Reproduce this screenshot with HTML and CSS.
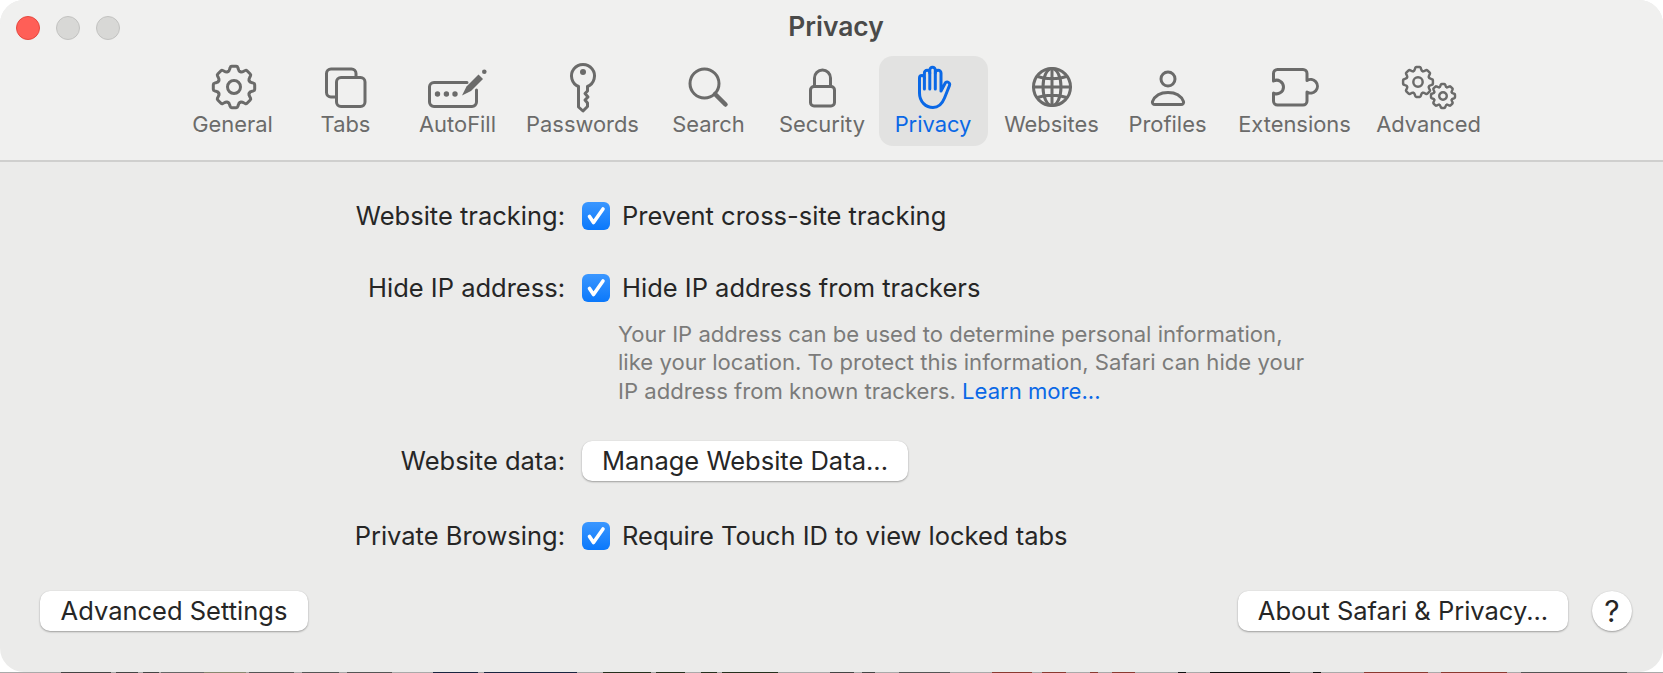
FILE: index.html
```html
<!DOCTYPE html>
<html lang="en">
<head>
<meta charset="utf-8">
<title>Privacy</title>
<link rel="stylesheet" href="styles.css">
</head>
<body>
<svg class="defs" width="0" height="0" aria-hidden="true">
  <defs>
    <linearGradient id="blue" x1="0" y1="0" x2="0" y2="1"><stop offset="0" stop-color="#3b97ff"/><stop offset="1" stop-color="#0a78fb"/></linearGradient>
    <path id="tooth" d="M-6.3-15.2C-5-15.6-4.6-16.5-4.3-18L-3.8-19.5Q-3.5-20.7-2.3-20.7H2.3Q3.5-20.7 3.8-19.5L4.3-18C4.6-16.5 5-15.6 6.3-15.2"/>
    <g id="gear">
      <use href="#tooth"/>
      <use href="#tooth" transform="rotate(45)"/>
      <use href="#tooth" transform="rotate(90)"/>
      <use href="#tooth" transform="rotate(135)"/>
      <use href="#tooth" transform="rotate(180)"/>
      <use href="#tooth" transform="rotate(225)"/>
      <use href="#tooth" transform="rotate(270)"/>
      <use href="#tooth" transform="rotate(315)"/>
      <circle r="6.5"/>
    </g>
    <path id="check" d="M7.5 14.5L11.5 20.5L21 7"/>
  </defs>
</svg>
<main class="window">
  <header class="head">
    <div class="titlebar">
      <div class="lights">
        <span class="light red"></span>
        <span class="light"></span>
        <span class="light"></span>
      </div>
      <h1 class="title">Privacy</h1>
    </div>
    <nav class="toolbar">
      <a class="tab">
        <svg class="ico" viewBox="0 0 64 52"><use href="#gear" transform="translate(33 26)"/></svg>
        <span>General</span>
      </a>
      <a class="tab">
        <svg class="ico" viewBox="0 0 64 52"><path d="M42 15V12.500A4.500 4.500 0 0 0 37.500 8H17A4.500 4.500 0 0 0 12.500 12.500V31.500A4.500 4.500 0 0 0 17 36H21"/><rect x="22.500" y="16.500" width="28.500" height="29" rx="4.500"/></svg>
        <span>Tabs</span>
      </a>
      <a class="tab">
        <svg class="ico" viewBox="0 0 64 52"><path d="M41 21.500H8A4.500 4.500 0 0 0 3.500 26V41A4.500 4.500 0 0 0 8 45.500H46A4.500 4.500 0 0 0 50.500 41V29"/><g class="solid"><circle cx="11.500" cy="33" r="2.700"/><circle cx="20.400" cy="33" r="2.700"/><circle cx="29" cy="33" r="2.700"/><path d="M36 34.500L40.500 25.500L52.500 13.500L57 18L45 30Z"/><circle cx="58.300" cy="10.800" r="2.300"/></g></svg>
        <span>AutoFill</span>
      </a>
      <a class="tab">
        <svg class="ico" viewBox="0 0 64 52"><path d="M27.500 25.500A11.500 11.500 0 1 1 36.500 25.500V30L34 32.500L37 36L34 39L36.500 42V45.500L32 50L27.500 46Z"/><circle class="solid" cx="32" cy="11" r="3"/></svg>
        <span>Passwords</span>
      </a>
      <a class="tab">
        <svg class="ico" viewBox="0 0 64 52"><circle cx="27.500" cy="22.500" r="14.500"/><path class="thick" d="M38 33L48.500 43.500"/></svg>
        <span>Search</span>
      </a>
      <a class="tab">
        <svg class="ico" viewBox="0 0 64 52"><rect x="20.500" y="25.500" width="24" height="19.500" rx="3.500"/><path d="M24.500 25V17A8 8 0 0 1 40.500 17V25"/></svg>
        <span>Security</span>
      </a>
      <a class="tab active">
        <svg class="ico" viewBox="0 0 64 52"><path d="M40 30V12A2.850 2.850 0 0 0 34.300 12V9A2.750 2.750 0 0 0 28.800 9V12A2.700 2.700 0 0 0 23.400 12V17A2.450 2.450 0 0 0 18.500 17V32C18.500 41 25 46.500 32 46.500C38 46.500 41.500 42 43.500 37L48.500 24.500A2.400 2.400 0 0 0 44 22.500L40 30"/><path d="M23.400 17V28M28.800 12V28M34.300 12V28"/></svg>
        <span>Privacy</span>
      </a>
      <a class="tab">
        <svg class="ico" viewBox="0 0 64 52"><circle cx="32" cy="26" r="18.500"/><ellipse cx="32" cy="26" rx="9" ry="18.500"/><path d="M32 7.500V44.500M13.500 26H50.500M17.500 15.500C26 18.500 38 18.500 46.500 15.500M17.500 36.500C26 33.500 38 33.500 46.500 36.500"/></svg>
        <span>Websites</span>
      </a>
      <a class="tab">
        <svg class="ico" viewBox="0 0 64 52"><circle cx="32" cy="18" r="7"/><path d="M19 43.500H45C47 43.500 48 42 47.500 40.500C45 34.500 39 31.500 32 31.500C25 31.500 19 34.500 16.500 40.500C16 42 17 43.500 19 43.500Z"/></svg>
        <span>Profiles</span>
      </a>
      <a class="tab">
        <svg class="ico" viewBox="0 0 64 52"><path d="M14.500 8.500H40A4 4 0 0 1 44 12.500V19.500A6.800 6.800 0 1 1 44 31V40A4 4 0 0 1 40 44H14.500A4 4 0 0 1 10.500 40V32A6.800 6.800 0 1 0 10.500 20V12.500A4 4 0 0 1 14.500 8.500Z"/></svg>
        <span>Extensions</span>
      </a>
      <a class="tab">
        <svg class="ico" viewBox="0 0 64 52"><use class="big" href="#gear" transform="translate(21 21) scale(.72)"/><use class="small" href="#gear" transform="translate(46 35) scale(.58)"/></svg>
        <span>Advanced</span>
      </a>
    </nav>
  </header>
  <section class="pane">
    <div class="row first">
      <span class="label">Website tracking:</span>
      <div class="field">
        <svg class="box" viewBox="0 0 28 28"><rect width="28" height="28" rx="6" fill="url(#blue)"/><use href="#check"/></svg>
        <span>Prevent cross-site tracking</span>
      </div>
    </div>
    <div class="row second">
      <span class="label">Hide IP address:</span>
      <div class="field">
        <svg class="box" viewBox="0 0 28 28"><rect width="28" height="28" rx="6" fill="url(#blue)"/><use href="#check"/></svg>
        <span>Hide IP address from trackers</span>
      </div>
    </div>
    <p class="note">Your IP address can be used to determine personal information,<br>like your location. To protect this information, Safari can hide your<br>IP address from known trackers. <a class="more">Learn more...</a></p>
    <div class="row third">
      <span class="label">Website data:</span>
      <div class="field">
        <button class="btn manage">Manage Website Data...</button>
      </div>
    </div>
    <div class="row fourth">
      <span class="label">Private Browsing:</span>
      <div class="field">
        <svg class="box" viewBox="0 0 28 28"><rect width="28" height="28" rx="6" fill="url(#blue)"/><use href="#check"/></svg>
        <span>Require Touch ID to view locked tabs</span>
      </div>
    </div>
    <footer class="foot">
      <button class="btn adv">Advanced Settings</button>
      <div class="foot-right">
        <button class="btn about">About Safari &amp; Privacy...</button>
        <button class="btn help">?</button>
      </div>
    </footer>
  </section>
</main>
</body>
</html>
```

FILE: styles.css
```css
* { box-sizing: border-box; }
html, body { margin: 0; padding: 0; height: 100%; }
body {
  background:
    linear-gradient(90deg,
      #aaa 61px, #444 61px, #444 111px, #aaa 111px,
      #aaa 116px, #444 116px, #444 138px, #aaa 138px,
      #aaa 143px, #444 143px, #444 159px, #aaa 159px,
      #aaa 161px, #666 161px, #666 204px,
      #888870 204px, #888870 246px, #aaa 246px,
      #aaa 249px, #555 249px, #555 294px, #aaa 294px,
      #aaa 302px, #555 302px, #555 339px, #aaa 339px,
      #aaa 347px, #555 347px, #555 392px, #aaa 392px,
      #aaa 433px, #1a2440 433px, #1a2440 478px, #aaa 478px,
      #aaa 484px, #1a2440 484px, #1a2440 577px, #aaa 577px,
      #aaa 603px, #26301e 603px, #26301e 651px, #aaa 651px,
      #aaa 656px, #26301e 656px, #26301e 685px, #aaa 685px,
      #aaa 701px, #26301e 701px, #26301e 717px, #aaa 717px,
      #aaa 722px, #26301e 722px, #26301e 778px, #aaa 778px,
      #aaa 830px, #444 830px, #444 854px, #aaa 854px,
      #aaa 862px, #444 862px, #444 875px, #aaa 875px,
      #aaa 899px, #555 899px, #555 950px, #aaa 950px,
      #aaa 992px, #8a3a30 992px, #8a3a30 1032px, #aaa 1032px,
      #aaa 1042px, #8a3a30 1042px, #8a3a30 1066px, #aaa 1066px,
      #aaa 1090px, #8a3a30 1090px, #8a3a30 1098px, #aaa 1098px,
      #aaa 1112px, #8a3a30 1112px, #8a3a30 1135px, #aaa 1135px,
      #aaa 1178px, #111 1178px, #111 1186px, #aaa 1186px,
      #aaa 1210px, #111 1210px, #111 1290px, #aaa 1290px,
      #aaa 1313px, #111 1313px, #111 1321px, #aaa 1321px,
      #aaa 1364px, #8a3a30 1364px, #8a3a30 1428px, #aaa 1428px,
      #aaa 1441px, #8a3a30 1441px, #8a3a30 1507px, #aaa 1507px,
      #aaa 1521px, #555 1521px, #555 1627px, #aaa 1627px
    ) left bottom / 100% 1px no-repeat,
    #fff;
  overflow: hidden;
  font-family: Inter, "Liberation Sans", sans-serif;
  color: #262626;
}
.defs { position: absolute; }
.window {
  width: 1663px;
  height: 672px;
  border-radius: 24px;
  overflow: hidden;
  background: #ebebea;
  display: flex;
  flex-direction: column;
}
.head {
  height: 162px;
  background: #f0f0ef;
  border-bottom: 2px solid #cfcfce;
  flex: none;
}
.titlebar {
  height: 56px;
  display: grid;
  grid-template-columns: 1fr auto 1fr;
  align-items: center;
}
.lights {
  display: flex;
  gap: 16px;
  padding-left: 16px;
}
.light {
  width: 24px;
  height: 24px;
  border-radius: 50%;
  background: #d8d8d6;
  border: 1px solid #c2c2c0;
}
.light.red { background: #ff5f57; border-color: #e5483f; }
.title {
  margin: 0 0 4px;
  padding-left: 9px;
  font-size: 26.400px;
  font-weight: 600;
  color: #4a4a49;
}
.toolbar {
  display: grid;
  grid-template-columns: 114px 112px 112px 138px 114px 113px 109px 128px 104px 150px 118px;
  justify-content: center;
}
.tab {
  height: 90px;
  border-radius: 14px;
  display: flex;
  flex-direction: column;
  align-items: center;
  padding-top: 5px;
  color: #6b6b6a;
  font-size: 21.900px;
  line-height: 28px;
}
.tab.active {
  background: #e2e2e1;
  color: #0a68e6;
}
.ico {
  width: 64px;
  height: 52px;
  flex: none;
  margin-bottom: -3px;
  overflow: visible;
  fill: none;
  stroke: #6b6b6a;
  stroke-width: 3;
  stroke-linejoin: round;
  stroke-linecap: round;
}
.active .ico { stroke: #0a68e6; }
.ico .solid { fill: #6b6b6a; stroke: none; }
.ico .thick { stroke-width: 4.500; }
.ico .big { stroke-width: 3.400; }
.ico .small { stroke-width: 4.200; }
.pane {
  flex: 1;
  display: flex;
  flex-direction: column;
  font-size: 25.500px;
  line-height: 28px;
}
.row { display: flex; align-items: center; }
.label {
  width: 565px;
  text-align: right;
  flex: none;
}
.field {
  margin-left: 17px;
  display: flex;
  align-items: center;
  gap: 12px;
}
.box { width: 28px; height: 28px; flex: none; }
.box use { fill: none; stroke: #fff; stroke-width: 3.600; stroke-linecap: round; stroke-linejoin: round; }
.first { margin-top: 40px; }
.second { margin-top: 44px; }
.note {
  margin: 18px 0 0 618px;
  font-size: 22.100px;
  line-height: 28.300px;
  color: #7b7b7a;
}
.more { color: #0a68e6; }
.third { margin-top: 36px; height: 40px; }
.fourth { margin-top: 41px; }
.btn {
  height: 40px;
  border: 0;
  border-radius: 10px;
  background: #fff;
  box-shadow: 0 1px 2px rgba(0,0,0,.32), 0 0 1px rgba(0,0,0,.12);
  font: inherit;
  color: #262626;
  padding: 0;
}
.manage { width: 326px; }
.foot {
  margin-top: 41px;
  padding: 0 31px 0 40px;
  display: flex;
  justify-content: space-between;
}
.foot-right { display: flex; gap: 24px; }
.adv { width: 268px; }
.about { width: 330px; }
.help { width: 40px; border-radius: 50%; font-size: 30px; }
```
